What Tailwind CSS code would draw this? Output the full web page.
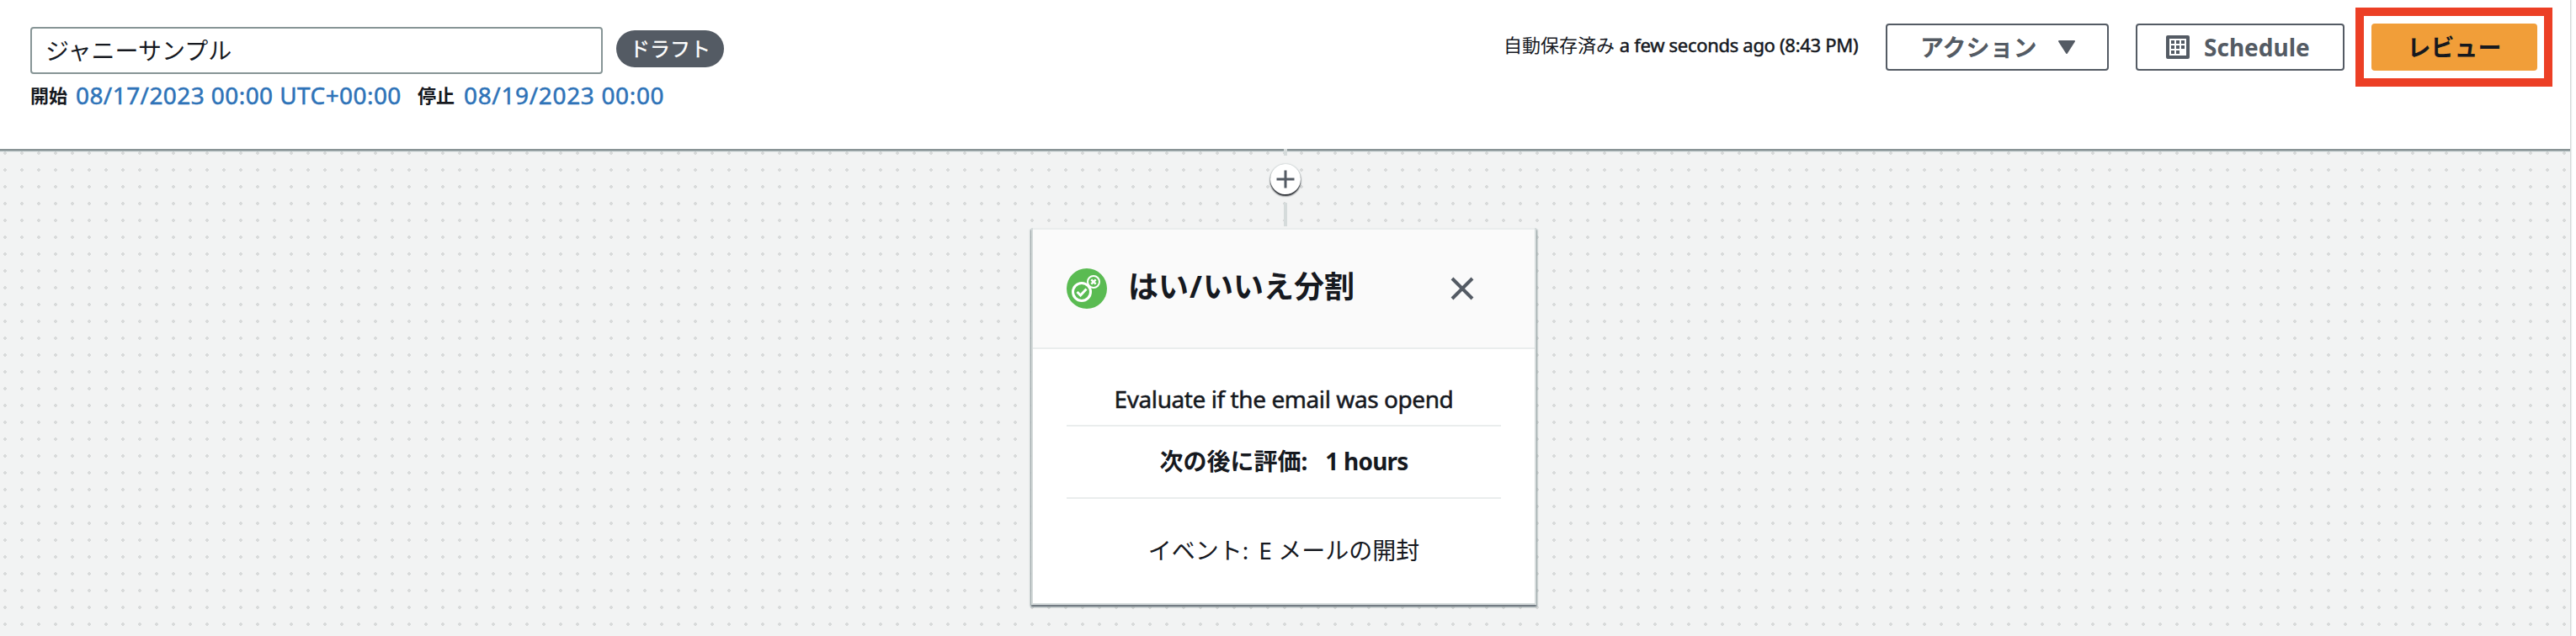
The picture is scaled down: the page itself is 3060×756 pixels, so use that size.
<!DOCTYPE html>
<html lang="ja">
<head>
<meta charset="utf-8">
<title>ジャニーサンプル</title>
<script src="https://cdn.jsdelivr.net/npm/@tailwindcss/browser@4"></script>
</head>
<body class="h-[756px] w-[3060px] overflow-hidden bg-white font-['Noto_Sans','Noto_Sans_CJK_JP',sans-serif] text-[28px] leading-[40px] text-[#16191f]">
<div class="flex h-[756px] w-[3053px] flex-col overflow-hidden shadow-[0_0_2px_1px_#c3cacb]">
  <header class="relative z-10 flex h-[177px] shrink-0 items-start justify-between bg-white shadow-[0_2px_0_#899395,0_3px_1px_#aab7b8]">
    <div class="pl-9 pt-8">
      <div class="flex items-start gap-4">
        <div class="flex h-14 w-[680px] items-center rounded border-2 border-[#879596] pl-4"><span class="whitespace-nowrap">ジャニーサンプル</span></div>
        <div class="mt-1 flex h-11 w-32 items-center justify-center rounded-full bg-[#545b64] text-2xl text-white [-webkit-text-stroke:0.4px_currentColor]">ドラフト</div>
      </div>
      <div class="mt-[5px] flex items-center whitespace-nowrap">
        <span class="w-[54px] text-[22px] font-bold">開始</span>
        <span class="w-[406px] tracking-[0.42px] text-[#2e73b8] [-webkit-text-stroke:0.5px_currentColor]">08/17/2023 00:00 UTC+00:00</span>
        <span class="w-[55px] text-[22px] font-bold">停止</span>
        <span class="tracking-[0.65px] text-[#2e73b8] [-webkit-text-stroke:0.5px_currentColor]">08/19/2023 00:00</span>
      </div>
    </div>
    <div class="flex items-start pr-[21px] pt-[9px]">
      <p class="mt-6 mr-8 w-[422px] whitespace-nowrap text-[22px]">自動保存済み <span class="tracking-[-0.3px] [-webkit-text-stroke:0.5px_currentColor]">a few seconds ago (8:43 PM)</span></p>
      <button class="mt-[19px] mr-8 flex h-14 w-[265px] items-center rounded border-2 border-[#545b64] pl-[39px] font-bold text-[#545b64]">
        <span class="w-[163px] whitespace-nowrap text-left">アクション</span>
        <svg width="22" height="18" viewBox="0 0 22 18"><path d="M2 2h18l-9 14z" fill="#545b64" stroke="#545b64" stroke-width="2" stroke-linejoin="round"/></svg>
      </button>
      <button class="mt-[19px] mr-[13px] flex h-14 w-[248px] items-center gap-[17px] rounded border-2 border-[#545b64] pl-[34px] font-bold text-[#545b64]">
        <svg width="28" height="28" viewBox="0 0 28 28" fill="#545b64"><path fill-rule="evenodd" d="M2 0h24a2 2 0 0 1 2 2v24a2 2 0 0 1-2 2H2a2 2 0 0 1-2-2V2a2 2 0 0 1 2-2zM4 4v20h20V4z"/><path d="M6 6h4v4H6zM12 6h4v4h-4zM18 6h4v4h-4zM6 12h4v4H6zM12 12h4v4h-4zM18 12h4v4h-4zM6 18h4v4H6zM12 18h4v4h-4z"/></svg>
        <span>Schedule</span>
      </button>
      <div class="h-[94px] w-[234px] border-[10px] border-[#ec3f25] pl-[9px] pt-[9px]">
        <button class="flex h-14 w-[197px] items-center justify-center rounded bg-[#f19e39] font-bold">レビュー</button>
      </div>
    </div>
  </header>
  <main class="flex grow flex-col items-center bg-[#f2f3f3] bg-[radial-gradient(circle_at_6px_5px,#d8dada_2px,transparent_2px)] bg-[size:20px_20px]">
    <div class="ml-px flex flex-col items-center">
      <div class="relative z-20 h-2 w-1 bg-[#d5dbdb]"></div>
      <div class="mt-[10px] flex size-9 items-center justify-center rounded-full bg-white shadow-[0_2px_2px_#16191f,0_0_2px_#aab7b8]">
        <svg width="22" height="22" viewBox="0 0 22 22"><path d="M11 .5v21M.5 11h21" stroke="#545b64" stroke-width="3"/></svg>
      </div>
      <div class="mt-[10px] h-7 w-1 bg-[#d5dbdb]"></div>
    </div>
    <section class="mt-[2px] mr-[3px] h-[448px] w-[600px] border-x-2 border-b-2 border-[#d5dbdb] bg-white shadow-[0_2px_2px_#687078,1px_2px_2px_#aab7b8,-1px_2px_2px_#aab7b8]">
      <div class="flex h-[144px] items-center border-y-2 border-[#eaeded] bg-[#fafafa] pl-10">
        <svg width="48" height="48" viewBox="0 0 48 48" fill="none" stroke="#fff"><circle cx="24" cy="24" r="24" fill="#5abb52" stroke="none"/><circle cx="18" cy="28" r="10.5" stroke-width="3"/><circle cx="32" cy="16" r="7" stroke-width="2"/><path d="M12.500 28l4 4 7-7.500" stroke-width="3"/><path d="M29.300 13.300l5.400 5.400M34.700 13.300l-5.400 5.400" stroke-width="2.500"/></svg>
        <h2 class="mb-1 ml-[25px] w-[383px] whitespace-nowrap text-4xl font-bold">はい<span class="px-px">/</span>いいえ分割</h2>
        <svg width="28" height="28" viewBox="0 0 28 28"><path d="M2 2l24 24M26 2L2 26" stroke="#545b64" stroke-width="4"/></svg>
      </div>
      <div class="flex flex-col px-10 text-center">
        <p class="h-[92px] border-b-2 border-[#eaeded] pt-[39px] tracking-[-0.42px] whitespace-nowrap [-webkit-text-stroke:0.5px_currentColor]">Evaluate if the email was opend</p>
        <p class="h-[86px] border-b-2 border-[#eaeded] pt-[21px] font-bold whitespace-nowrap"><span class="mr-[21px]">次の後に評価:</span><span class="tracking-[-0.8px]">1 hours</span></p>
        <p class="pt-[41px] whitespace-nowrap"><span class="mr-3">イベント:</span><span>E メールの開封</span></p>
      </div>
    </section>
  </main>
</div>
</body>
</html>
